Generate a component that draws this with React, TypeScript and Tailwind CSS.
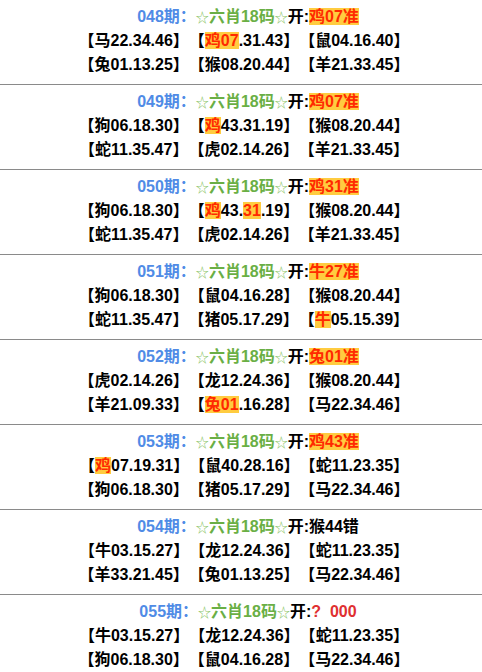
const blocks = [
  {
    no: "048",
    open: "鸡07准",
    rows: [
      ["马22.34.46", "[鸡07].31.43", "鼠04.16.40"],
      ["兔01.13.25", "猴08.20.44", "羊21.33.45"],
    ],
  },
  {
    no: "049",
    open: "鸡07准",
    rows: [
      ["狗06.18.30", "[鸡]43.31.19", "猴08.20.44"],
      ["蛇11.35.47", "虎02.14.26", "羊21.33.45"],
    ],
  },
  {
    no: "050",
    open: "鸡31准",
    rows: [
      ["狗06.18.30", "[鸡]43.[31].19", "猴08.20.44"],
      ["蛇11.35.47", "虎02.14.26", "羊21.33.45"],
    ],
  },
  {
    no: "051",
    open: "牛27准",
    rows: [
      ["狗06.18.30", "鼠04.16.28", "猴08.20.44"],
      ["蛇11.35.47", "猪05.17.29", "[牛]05.15.39"],
    ],
  },
  {
    no: "052",
    open: "兔01准",
    rows: [
      ["虎02.14.26", "龙12.24.36", "猴08.20.44"],
      ["羊21.09.33", "[兔01].16.28", "马22.34.46"],
    ],
  },
  {
    no: "053",
    open: "鸡43准",
    rows: [
      ["[鸡]07.19.31", "鼠40.28.16", "蛇11.23.35"],
      ["狗06.18.30", "猪05.17.29", "马22.34.46"],
    ],
  },
  {
    no: "054",
    miss: "猴44错",
    rows: [
      ["牛03.15.27", "龙12.24.36", "蛇11.23.35"],
      ["羊33.21.45", "兔01.13.25", "马22.34.46"],
    ],
  },
  {
    no: "055",
    pending: true,
    rows: [
      ["牛03.15.27", "龙12.24.36", "蛇11.23.35"],
      ["狗06.18.30", "鼠04.16.28", "马22.34.46"],
    ],
  },
];

// "[..]" marks the highlighted part of an entry
const Entry = ({ text }: { text: string }) => {
  const parts = text.split(/(\[[^\]]+\])/).filter(Boolean);
  return (
    <span>
      【
      {parts.map((p, i) =>
        p.startsWith("[") ? (
          <span key={i} className="bg-[#ffcc40] text-[#ff2a00]">
            {p.slice(1, -1)}
          </span>
        ) : (
          <span key={i}>{p}</span>
        )
      )}
      】
    </span>
  );
};

const Star = () => (
  <span className="inline-block text-[13px] leading-none font-normal text-[#8cc66a]">
    ☆
  </span>
);

export default function App() {
  return (
    <div
      className="w-[482px] bg-white text-[16px] font-bold text-black [text-spacing-trim:space-all]"
      style={{ fontFamily: '"Liberation Sans", "Noto Sans CJK SC", sans-serif' }}
    >
      {blocks.map((b, idx) => (
        <div
          key={b.no}
          className={`pt-[5px] pb-[7px] text-center leading-6 ${
            idx < blocks.length - 1 ? "border-b border-[#8a8a8a]" : ""
          }`}
        >
          <div className="pl-[14px]">
            <span className="text-[#4f8be6]">{b.no}期：</span>
            <Star />
            <span className="text-[#6aaf45]">六肖18码</span>
            <Star />
            <span>开:</span>
            {b.open && (
              <span className="bg-[#ffcc40] text-[#ff2a00]">{b.open}</span>
            )}
            {b.miss && <span>{b.miss}</span>}
            {b.pending && <span className="text-[#e03030]">?&nbsp; 000</span>}
          </div>
          {b.rows.map((r, ri) => (
            <div key={ri} className="pl-[6px]">
              {r.map((e, ei) => (
                <Entry key={ei} text={e} />
              ))}
            </div>
          ))}
        </div>
      ))}
    </div>
  );
}
